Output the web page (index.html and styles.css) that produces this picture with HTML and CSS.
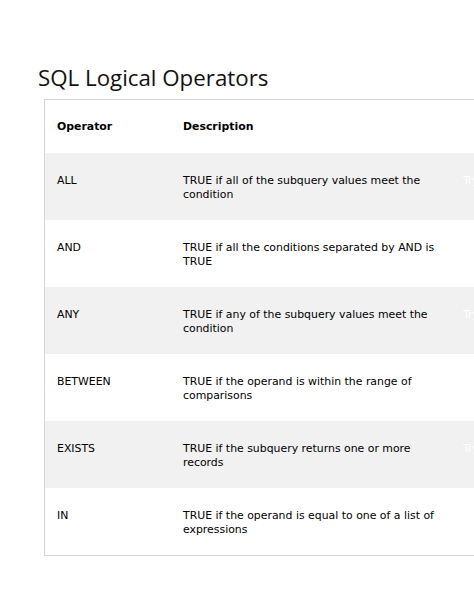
FILE: index.html
```html
<!DOCTYPE html>
<html>
<head>
<meta charset="utf-8">
<link rel="stylesheet" href="styles.css">
</head>
<body>
<div class="page">
  <h1 class="title">SQL Logical Operators</h1>
  <div class="frame">
    <table class="ops">
      <colgroup><col class="c1"><col class="c2"><col class="c3"></colgroup>
      <tr class="head"><th>Operator</th><th>Description</th><th></th></tr>
      <tr class="alt"><td>ALL</td><td>TRUE if all of the subquery values meet the condition</td><td class="try">Try it</td></tr>
      <tr><td>AND</td><td>TRUE if all the conditions separated by AND is TRUE</td><td class="try">Try it</td></tr>
      <tr class="alt"><td>ANY</td><td>TRUE if any of the subquery values meet the condition</td><td class="try">Try it</td></tr>
      <tr><td>BETWEEN</td><td>TRUE if the operand is within the range of comparisons</td><td class="try">Try it</td></tr>
      <tr class="alt"><td>EXISTS</td><td>TRUE if the subquery returns one or more records</td><td class="try">Try it</td></tr>
      <tr><td>IN</td><td>TRUE if the operand is equal to one of a list of expressions</td><td class="try">Try it</td></tr>
    </table>
  </div>
</div>
</body>
</html>
```

FILE: styles.css
```css
html, body { margin: 0; padding: 0; background: #fff; }
.page { padding: 63px 0 0 44px; }
.title {
  font-family: "Open Sans", "Noto Sans", sans-serif;
  font-weight: 400;
  font-size: 22.3px;
  line-height: 29px;
  margin: 0 0 7px -6px;
  color: #111;
}
.frame {
  width: 429px;
  border: 1px solid #d6d6d6;
  overflow: hidden;
}
.ops {
  border-collapse: collapse;
  width: 520px;
  table-layout: fixed;
  font-family: "DejaVu Sans", Verdana, sans-serif;
  font-size: 10.9px;
  line-height: 13.5px;
  color: #000;
}
.c1 { width: 126px; }
.c2 { width: 280px; }
.c3 { width: 114px; }
.ops th, .ops td {
  text-align: left;
  vertical-align: top;
  padding: 21px 12px 19px;
}
.ops tr.head th { padding: 20px 12px 19px; font-weight: bold; }
.ops tr { height: 67px; }
.ops tr.head { height: 53px; }
.ops tr.alt { background: #f1f1f1; }
.ops td.try { color: #fff; }
```
